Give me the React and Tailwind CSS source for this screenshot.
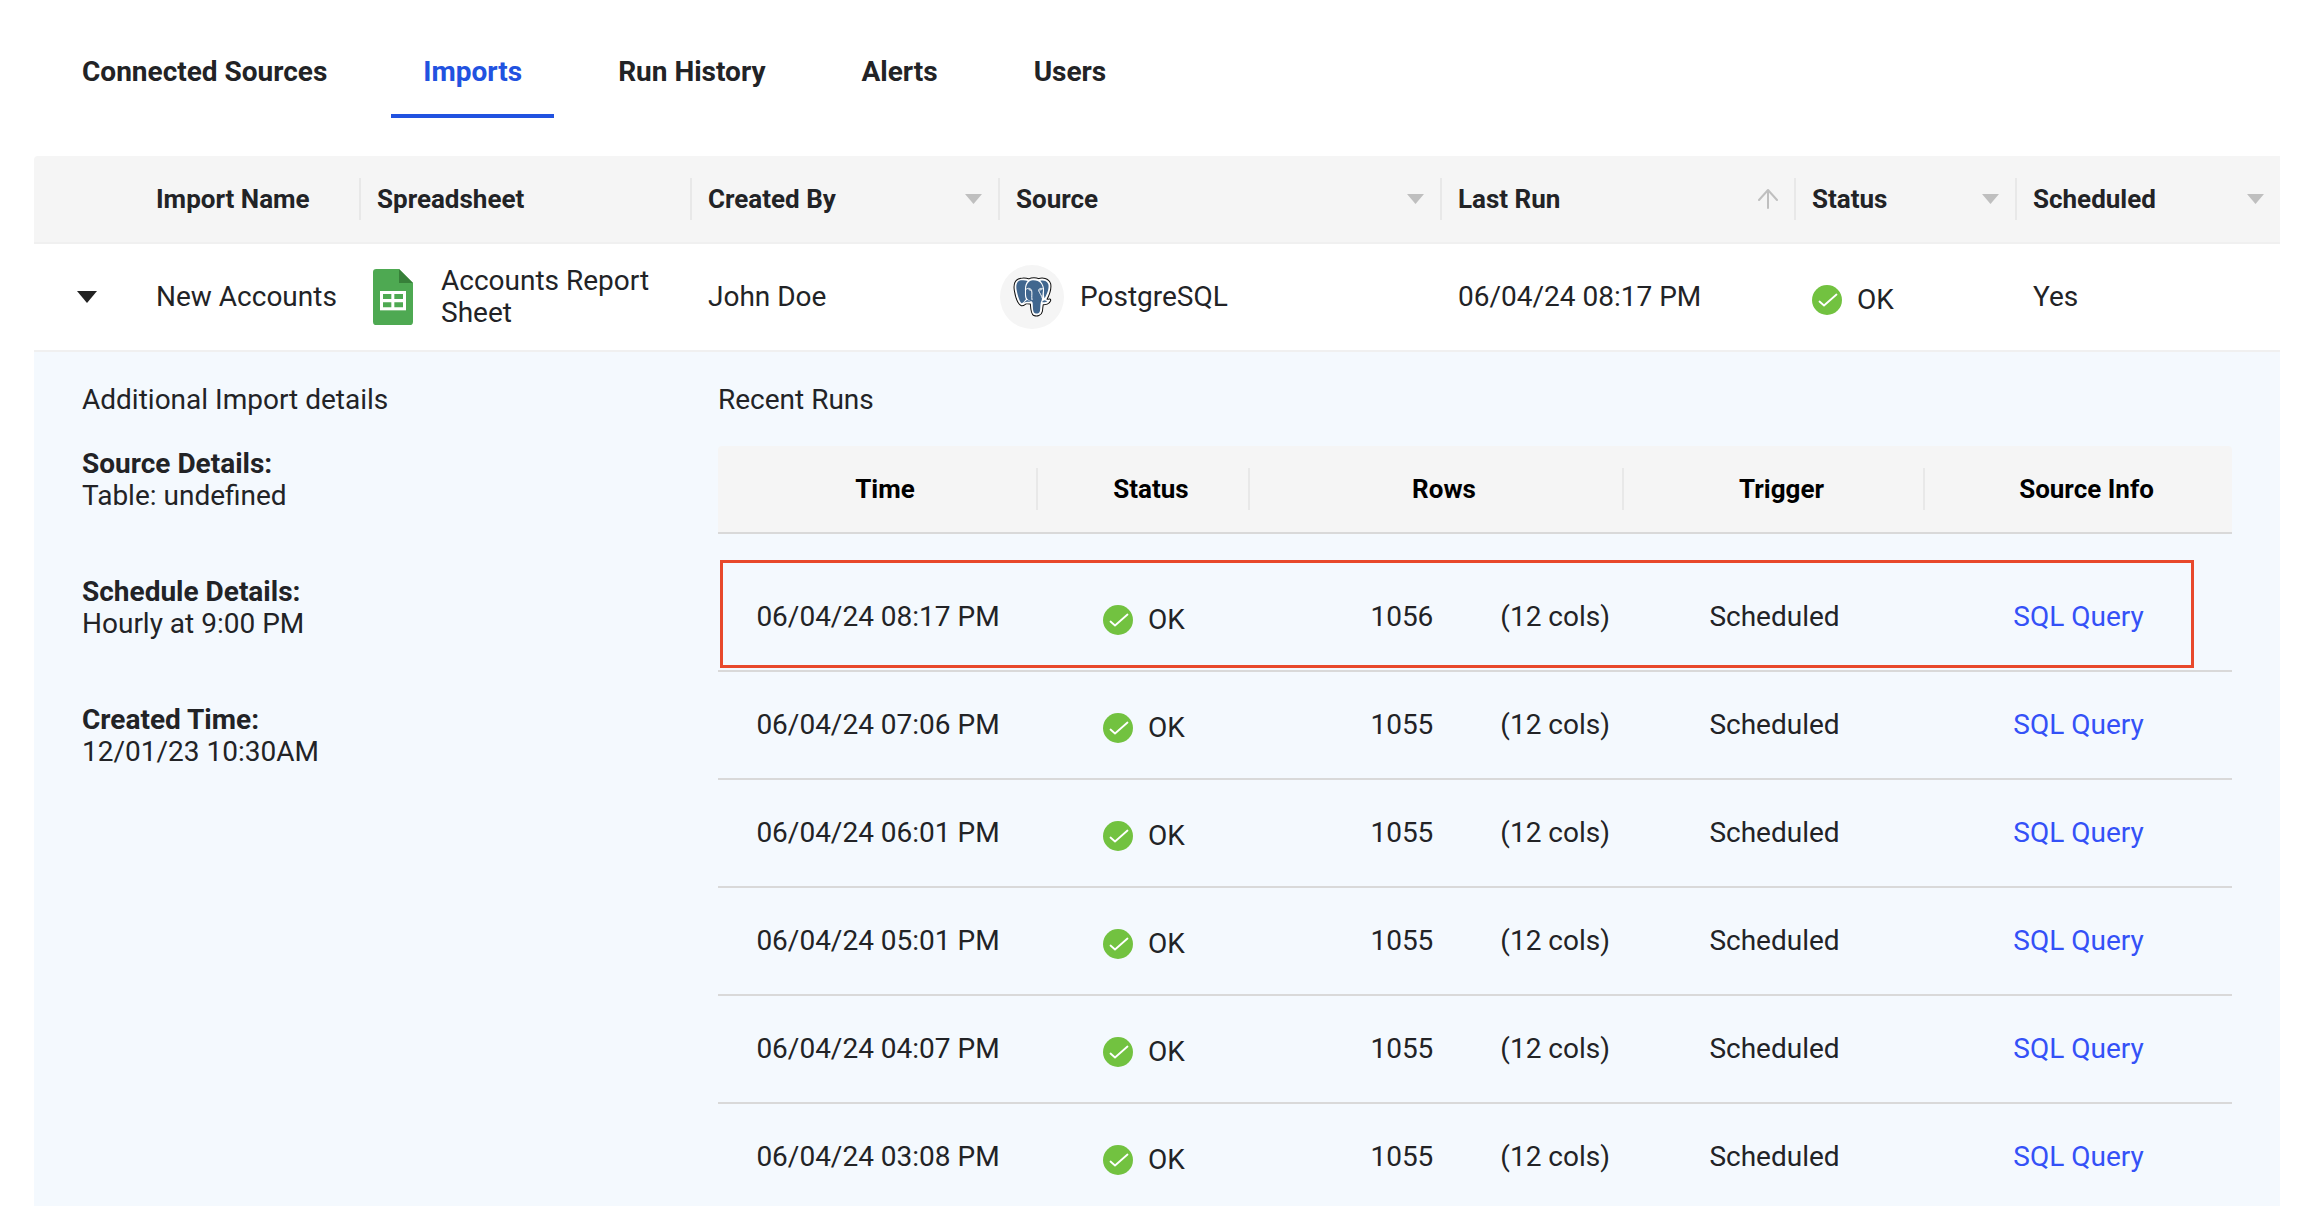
import React, { useState } from "react";

const tabs = ["Connected Sources", "Imports", "Run History", "Alerts", "Users"];

const columns = [
  { label: "", width: "w-[106px]" },
  { label: "Import Name", width: "w-[221px]", divider: true },
  { label: "Spreadsheet", width: "w-[331px]", divider: true },
  { label: "Created By", width: "w-[308px]", divider: true, icon: "filter" },
  { label: "Source", width: "w-[442px]", divider: true, icon: "filter" },
  { label: "Last Run", width: "w-[354px]", divider: true, icon: "sort" },
  { label: "Status", width: "w-[221px]", divider: true, icon: "filter" },
  { label: "Scheduled", width: "w-[263px]", icon: "filter" },
];

const runColumns = [
  { label: "Time", width: "w-[320px]", divider: true },
  { label: "Status", width: "w-[212px]", divider: true },
  { label: "Rows", width: "w-[374px]", divider: true },
  { label: "Trigger", width: "w-[301px]", divider: true },
  { label: "Source Info", width: "w-[307px]" },
];

const runs = [
  { time: "06/04/24 08:17 PM", rows: 1056 },
  { time: "06/04/24 07:06 PM", rows: 1055 },
  { time: "06/04/24 06:01 PM", rows: 1055 },
  { time: "06/04/24 05:01 PM", rows: 1055 },
  { time: "06/04/24 04:07 PM", rows: 1055 },
  { time: "06/04/24 03:08 PM", rows: 1055 },
];

const details = [
  { title: "Source Details:", value: "Table: undefined" },
  { title: "Schedule Details:", value: "Hourly at 9:00 PM" },
  { title: "Created Time:", value: "12/01/23 10:30AM" },
];

const FilterIcon = () => (
  <svg className="w-[17px] h-[10px]" viewBox="0 0 17 10" fill="#bfbfbf">
    <path d="M0 0h17L8.5 10z" />
  </svg>
);

const SortIcon = () => (
  <svg
    className="w-5 h-5"
    viewBox="0 0 20 20"
    fill="none"
    stroke="#bfbfbf"
    strokeWidth="2"
    strokeLinecap="round"
    strokeLinejoin="round"
  >
    <path d="M10 19V1M1 11L10 1L19 11" />
  </svg>
);

const CheckIcon = () => (
  <svg className="w-[30px] h-[30px] shrink-0" viewBox="0 0 30 30">
    <circle cx="15" cy="15" r="15" fill="#72c240" />
    <path
      d="M7.5 16.5L12 20.5L24.5 9.5"
      fill="none"
      stroke="#fff"
      strokeWidth="1.8"
      strokeLinecap="round"
      strokeLinejoin="round"
    />
  </svg>
);

const SheetsIcon = () => (
  <svg className="w-10 h-14 shrink-0" viewBox="0 0 120 168">
    <path d="M10 0H78L120 42V158a10 10 0 0 1-10 10H10a10 10 0 0 1-10-10V10A10 10 0 0 1 10 0z" fill="#4ea952" />
    <path d="M78 0L120 42H78z" fill="#378039" />
    <path d="M21 66h78v58H21z" fill="#fff" />
    <path d="M30 75h25v15H30zM64 75h26v15H64zM30 100h25v15H30zM64 100h26v15H64z" fill="#4ea952" />
  </svg>
);

const PostgresIcon = () => (
  <svg className="w-[39px] h-[40px]" viewBox="0 0 117 120" strokeLinejoin="round" strokeLinecap="round">
    {/* dark outline */}
    <g fill="#111" stroke="#111" strokeWidth="11">
      <path d="M24 8C9 10 5 22 8 40C11 58 17 77 26 82C32 83 36 76 40 76C48 78 53 76 56 78C57 94 57 108 64 112C72 115 82 112 84 103C86 94 85 85 88 79C98 80 107 76 109 70C104 72 99 70 97 68C105 53 112 34 109 21C104 7 88 5 77 9C68 6 56 6 48 10C40 7 31 6 24 8z" />
    </g>
    {/* white edge */}
    <g fill="#fff" stroke="#fff" strokeWidth="5">
      <path d="M24 8C9 10 5 22 8 40C11 58 17 77 26 82C32 83 36 76 40 76C48 78 53 76 56 78C57 94 57 108 64 112C72 115 82 112 84 103C86 94 85 85 88 79C98 80 107 76 109 70C104 72 99 70 97 68C105 53 112 34 109 21C104 7 88 5 77 9C68 6 56 6 48 10C40 7 31 6 24 8z" />
    </g>
    <g fill="#41678f">
      <path d="M24 10C11 12 8 24 11 40C14 56 19 74 26 79C30 79 34 72 39 67C35 60 36 50 36 42C35 28 38 18 44 12C37 9 30 9 24 10z" />
      <path d="M60 10C46 11 40 22 39 36C39 50 38 60 43 66C50 74 58 70 59 78C60 92 59 106 66 109C73 111 80 108 81 101C83 88 81 78 86 70C89 62 88 52 90 40C90 24 82 10 60 10z" />
      <path d="M82 11C90 20 95 32 93 44C92 52 93 58 95 64C103 50 109 33 106 22C102 11 91 9 82 11z" />
      <path d="M32 77L42 69L54 73C48 76 40 73 32 77z" />
      <path d="M89 72L95 70L103 73C98 77 92 76 88 76z" />
    </g>
    {/* ears, eyes and trunk lines */}
    <g fill="none" stroke="#fff" strokeWidth="3">
      <path d="M39 37C46 31 54 34 56 41C58 51 55 58 57 68" />
      <path d="M90 36C84 32 77 34 77 41C80 49 86 55 88 64" />
      <path d="M48 38L54 40M80 39L85 38" />
    </g>
  </svg>
);

const Status = ({ centered }) => (
  <div className={`flex items-center gap-[15px] pt-[6px] ${centered ? "justify-center" : ""}`}>
    <CheckIcon />
    <span>OK</span>
  </div>
);

const ImportDetails = () => (
  <div className="w-[636px] shrink-0">
    <h2>Additional Import details</h2>
    {details.map((d) => (
      <div key={d.title} className="mt-8 mb-16">
        <h3 className="font-bold">{d.title}</h3>
        <p>{d.value}</p>
      </div>
    ))}
  </div>
);

const RecentRuns = () => (
  <div className="flex-1">
    <h2>Recent Runs</h2>
    <div className="relative mt-[30px]">
      <table className="w-full table-fixed">
        <thead>
          <tr className="border-b-2 border-[#d9d9d9]">
            {runColumns.map((col) => (
              <th
                key={col.label}
                className={`${col.width} bg-[#f5f5f5] p-0 py-[22px] text-[26px] text-black first:rounded-tl last:rounded-tr`}
              >
                <div
                  className={`h-[42px] pl-4 flex items-center justify-center ${
                    col.divider ? "border-r-2 border-[#e8e8e8]" : ""
                  }`}
                >
                  {col.label}
                </div>
              </th>
            ))}
          </tr>
        </thead>
        <tbody className="text-center">
          <tr>
            <td colSpan={5} className="h-[30px] p-0" />
          </tr>
          {runs.map((run) => (
            <tr key={run.time} className="h-[108px] border-b-2 border-[#d9d9d9]">
              <td>{run.time}</td>
              <td>
                <Status centered />
              </td>
              <td>
                <div className="flex justify-end gap-[67px] pr-[14px]">
                  <span>{run.rows}</span>
                  <span>(12 cols)</span>
                </div>
              </td>
              <td>Scheduled</td>
              <td>
                <a href="#query" className="text-[#3451f7]">
                  SQL Query
                </a>
              </td>
            </tr>
          ))}
        </tbody>
      </table>
      {/* highlight around the latest run */}
      <div className="absolute left-[2px] right-[38px] top-[114px] h-[108px] border-3 border-[#e8492c] pointer-events-none" />
    </div>
  </div>
);

const App = () => {
  const [activeTab, setActiveTab] = useState("Imports");
  const [expanded, setExpanded] = useState(true);

  return (
    <div className="h-screen overflow-hidden bg-white text-[28px] leading-8 text-[#222326] font-['Roboto',sans-serif]">
      <nav className="flex gap-8 pl-[50px]">
        {tabs.map((tab) => (
          <button
            key={tab}
            onClick={() => setActiveTab(tab)}
            className={`px-8 pt-14 pb-[26px] font-bold border-b-4 ${
              activeTab === tab ? "text-[#2152e0] border-[#2152e0]" : "border-transparent"
            }`}
          >
            {tab}
          </button>
        ))}
      </nav>

      <div className="mt-[38px] pl-[34px] pr-7">
        <table className="w-full table-fixed text-left">
          <thead>
            <tr className="border-b-2 border-[#f0f0f0]">
              {columns.map((col) => (
                <th
                  key={col.label}
                  className={`${col.width} bg-[#f5f5f5] p-0 py-[22px] text-[26px] first:rounded-tl`}
                >
                  <div
                    className={`h-[42px] px-4 flex items-center justify-between ${
                      col.divider ? "border-r-2 border-[#e8e8e8]" : ""
                    }`}
                  >
                    {col.label}
                    {col.icon === "filter" && <FilterIcon />}
                    {col.icon === "sort" && <SortIcon />}
                  </div>
                </th>
              ))}
            </tr>
          </thead>
          <tbody>
            <tr className="h-[108px] border-b-2 border-[#f0f0f0]">
              <td className="pl-[43px]">
                <button
                  aria-label="Toggle details"
                  onClick={() => setExpanded(!expanded)}
                  className="flex"
                >
                  <svg className="w-5 h-3" viewBox="0 0 20 12" fill="#222">
                    <path d="M0 0h20L10 12z" />
                  </svg>
                </button>
              </td>
              <td className="pl-4">New Accounts</td>
              <td className="pl-3">
                <div className="flex items-center gap-7 pr-10">
                  <SheetsIcon />
                  <span>Accounts Report Sheet</span>
                </div>
              </td>
              <td className="pl-4">John Doe</td>
              <td>
                <div className="flex items-center gap-4">
                  <span className="w-16 h-16 rounded-full bg-[#f5f5f5] flex items-center justify-center">
                    <PostgresIcon />
                  </span>
                  PostgreSQL
                </div>
              </td>
              <td className="pl-4">06/04/24 08:17 PM</td>
              <td className="pl-4">
                <Status />
              </td>
              <td className="pl-4">Yes</td>
            </tr>
            {expanded && (
              <tr>
                <td colSpan={8} className="bg-[#f4f9fe] p-0">
                  <div className="flex pt-8 pl-12 pr-12 pb-8">
                    <ImportDetails />
                    <RecentRuns />
                  </div>
                </td>
              </tr>
            )}
          </tbody>
        </table>
      </div>
    </div>
  );
};

export default App;
